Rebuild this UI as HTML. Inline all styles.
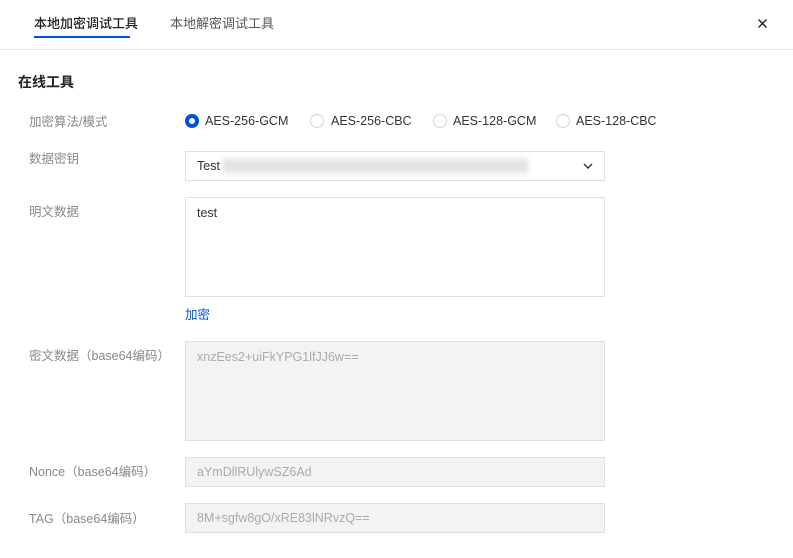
<!DOCTYPE html><html><head><meta charset="utf-8"><style>
body{margin:0;width:793px;height:558px;background:#fff;font-family:"Liberation Sans","Noto Sans CJK SC",sans-serif;position:relative;overflow:hidden;color:#333}
.a{position:absolute;white-space:nowrap}
.lab{position:absolute;left:29px;font-size:12.5px;color:#888}
.box{position:absolute;left:185px;width:418px;border:1px solid #dcdfe6;font-size:12.5px}
.g{background:#f3f3f4;color:#aaa}
.r{position:absolute;top:114px;width:14px;height:14px;border:1px solid #cfd3da;border-radius:50%;box-sizing:border-box}
.rt{position:absolute;top:114px;font-size:12.5px}
</style></head><body>
<div class="a" style="left:34px;top:13px;font-size:13px;color:#222;font-weight:500">本地加密调试工具</div>
<div class="a" style="left:34px;top:36px;width:96px;height:2px;background:#0052d9"></div>
<div class="a" style="left:170px;top:13px;font-size:13px;color:#555">本地解密调试工具</div>
<svg class="a" style="left:758px;top:19px" width="9" height="9"><path d="M0.5 0.5L8.5 8.5M8.5 0.5L0.5 8.5" stroke="#222" stroke-width="1.4"/></svg>
<div class="a" style="left:0;top:49px;width:793px;height:1px;background:#e7e7e7"></div>
<div class="a" style="left:18px;top:72px;font-size:14px;font-weight:bold;color:#222">在线工具</div>
<div class="lab" style="top:111px">加密算法/模式</div>
<div class="r" style="left:185px;border:4px solid #0052d9"></div><div class="rt" style="left:205px">AES-256-GCM</div>
<div class="r" style="left:310px"></div><div class="rt" style="left:331px">AES-256-CBC</div>
<div class="r" style="left:433px"></div><div class="rt" style="left:453px">AES-128-GCM</div>
<div class="r" style="left:556px"></div><div class="rt" style="left:576px">AES-128-CBC</div>
<div class="lab" style="top:148px">数据密钥</div>
<div class="box" style="top:151px;height:28px"><span class="a" style="left:11px;top:7px">Test</span>
<div class="a" style="left:37px;top:7px;width:305px;height:14px;background:#e2e2e2;filter:blur(3px)"></div>
<svg class="a" style="left:397px;top:10px" width="10" height="8"><path d="M1 2L5 6L9 2" stroke="#333" stroke-width="1.4" fill="none"/></svg></div>
<div class="lab" style="top:201px">明文数据</div>
<div class="box" style="top:197px;height:98px"><span class="a" style="left:11px;top:8px">test</span></div>
<div class="a" style="left:185px;top:304px;font-size:12.5px;color:#0052d9">加密</div>
<div class="lab" style="top:345px">密文数据（base64编码）</div>
<div class="box g" style="top:341px;height:98px"><span class="a" style="left:11px;top:8px">xnzEes2+uiFkYPG1lfJJ6w==</span></div>
<div class="lab" style="top:461px">Nonce（base64编码）</div>
<div class="box g" style="top:457px;height:28px"><span class="a" style="left:11px;top:7px">aYmDllRUlywSZ6Ad</span></div>
<div class="lab" style="top:508px">TAG（base64编码）</div>
<div class="box g" style="top:503px;height:28px"><span class="a" style="left:11px;top:7px">8M+sgfw8gO/xRE83lNRvzQ==</span></div>
</body></html>
